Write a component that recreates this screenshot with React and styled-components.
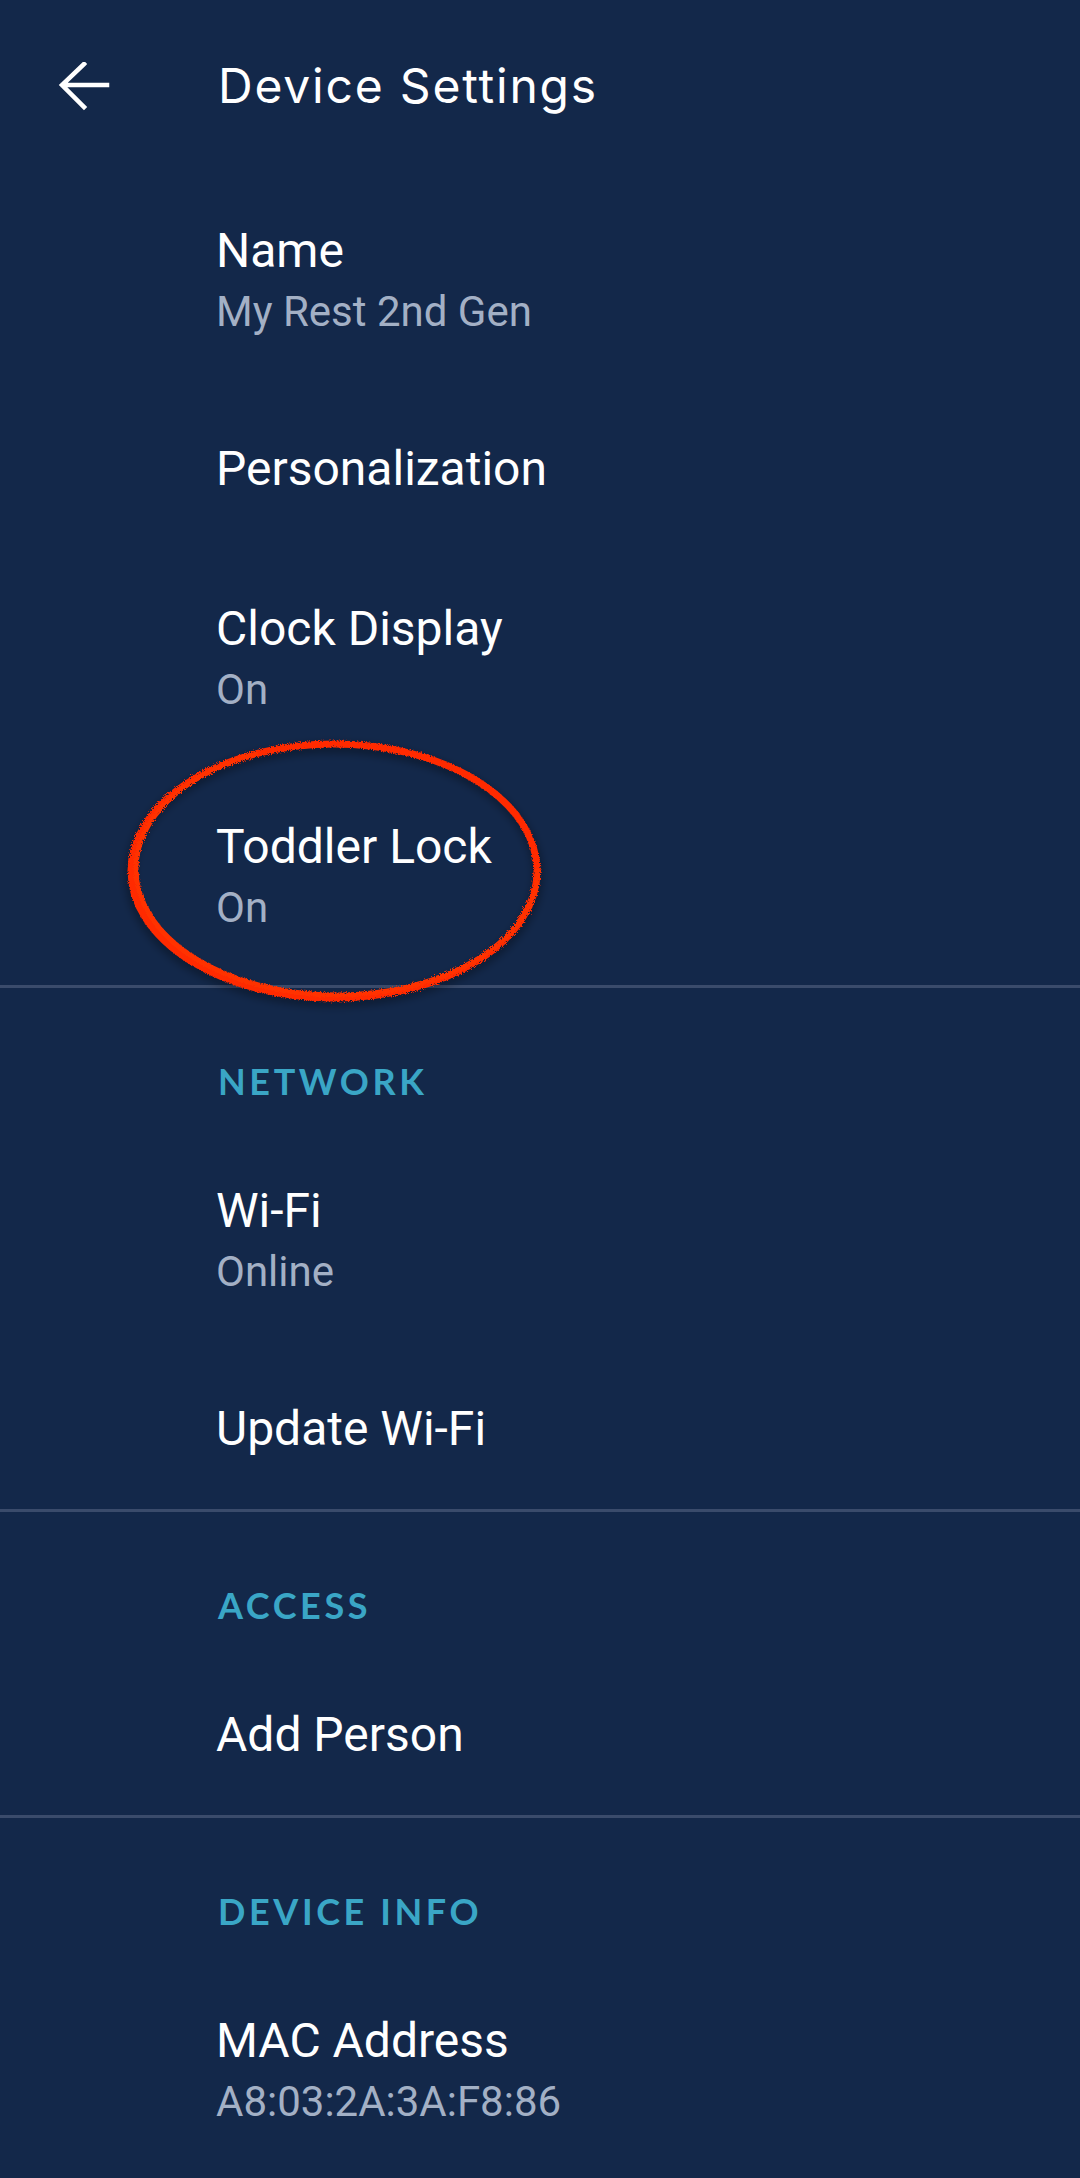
import React from "react";
import styled, { createGlobalStyle } from "styled-components";

const sections = [
  {
    items: [
      { title: "Name", value: "My Rest 2nd Gen" },
      { title: "Personalization" },
      { title: "Clock Display", value: "On" },
      { title: "Toddler Lock", value: "On", circled: true },
    ],
  },
  {
    label: "Network",
    items: [{ title: "Wi-Fi", value: "Online" }, { title: "Update Wi-Fi" }],
  },
  {
    label: "Access",
    items: [{ title: "Add Person" }],
  },
  {
    label: "Device Info",
    items: [{ title: "MAC Address", value: "A8:03:2A:3A:F8:86" }],
  },
];

function BackArrow() {
  return (
    <svg width="52" height="50" viewBox="0 0 52 50" fill="none">
      <path
        d="M49 23H5M26 2L4 23l22 22"
        stroke="#ffffff"
        strokeWidth="4.5"
        strokeLinecap="square"
      />
    </svg>
  );
}

function HandCircle() {
  return (
    <Circle width="460" height="310" viewBox="0 0 460 310">
      <defs>
        <filter id="rough" x="-10%" y="-10%" width="120%" height="120%">
          <feTurbulence type="fractalNoise" baseFrequency="0.9" numOctaves="2" seed="4" />
          <feDisplacementMap in="SourceGraphic" scale="5" />
        </filter>
        <filter id="shade" x="-10%" y="-10%" width="120%" height="120%">
          <feGaussianBlur stdDeviation="4" />
        </filter>
      </defs>
      <ellipse cx="226" cy="156" rx="204" ry="127" stroke="#000000" strokeOpacity="0.35" strokeWidth="9" filter="url(#shade)" />
      <g filter="url(#rough)">
        <ellipse cx="226" cy="152" rx="203" ry="127" stroke="#ff2a00" strokeWidth="7" />
        <ellipse
          cx="229"
          cy="150"
          rx="201"
          ry="126"
          stroke="#ff3300"
          strokeWidth="5"
          strokeDasharray="700 400"
        />
      </g>
    </Circle>
  );
}

export default function App() {
  return (
    <>
      <GlobalStyle />
      <Screen>
        <Header>
          <BackButton aria-label="Back">
            <BackArrow />
          </BackButton>
          <Title>Device Settings</Title>
        </Header>
        {sections.map((section, i) => (
          <Section key={i} $divided={i > 0}>
            {section.label && <SectionLabel>{section.label}</SectionLabel>}
            {section.items.map((item) => (
              <Item key={item.title} $twoLine={!!item.value}>
                <ItemTitle>{item.title}</ItemTitle>
                {item.value && <ItemValue>{item.value}</ItemValue>}
                {item.circled && <HandCircle />}
              </Item>
            ))}
          </Section>
        ))}
      </Screen>
    </>
  );
}

const GlobalStyle = createGlobalStyle`
  html, body {
    margin: 0;
    background: #13284a;
  }
`;

const Screen = styled.div`
  width: 1080px;
  min-height: 2178px;
  background: #13284a;
  font-family: Roboto, "Liberation Sans", sans-serif;
  overflow: hidden;
`;

const Header = styled.header`
  display: grid;
  grid-template-columns: 218px 1fr;
  align-items: center;
  height: 171px;
`;

const BackButton = styled.div`
  display: flex;
  align-items: center;
  padding-left: 58px;
  padding-top: 2px;
`;

const Title = styled.h1`
  margin: 0;
  font-family: Inter, "Noto Sans", sans-serif;
  font-size: 48px;
  font-weight: 400;
  letter-spacing: 1.8px;
  color: #ffffff;
  line-height: 60px;
`;

const Section = styled.section`
  display: flex;
  flex-direction: column;
  border-top: ${(p) => (p.$divided ? "3px solid #3a4b6b" : "none")};
`;

const SectionLabel = styled.div`
  padding: 73px 0 30px 218px;
  height: 40px;
  line-height: 40px;
  font-family: Lato, "Noto Sans", sans-serif;
  font-weight: 700;
  font-size: 36px;
  letter-spacing: 3.6px;
  text-transform: uppercase;
  color: #3aa6c6;
`;

const Item = styled.div`
  position: relative;
  display: flex;
  flex-direction: column;
  justify-content: center;
  height: ${(p) => (p.$twoLine ? 218 : 160)}px;
  box-sizing: border-box;
  padding-left: 216px;
`;

const ItemTitle = styled.div`
  font-size: 48px;
  line-height: 64px;
  color: #ffffff;
`;

const ItemValue = styled.div`
  font-size: 42px;
  line-height: 58px;
  color: #a3b0c5;
`;

const Circle = styled.svg`
  position: absolute;
  left: 108px;
  top: -48px;
  fill: none;
  pointer-events: none;
`;
